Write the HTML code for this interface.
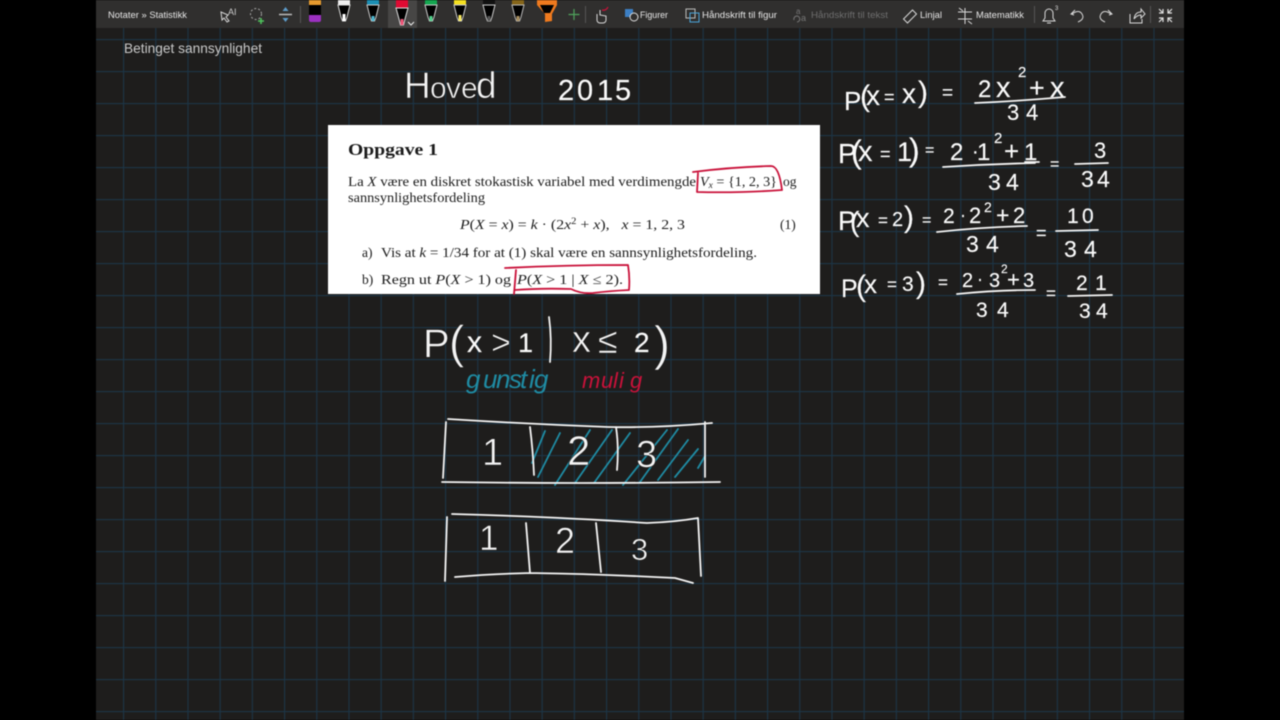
<!DOCTYPE html>
<html lang="nb"><head><meta charset="utf-8"><title>Betinget sannsynlighet</title>
<style>
html,body{margin:0;padding:0;background:#000;width:1280px;height:720px;overflow:hidden}
svg{display:block;filter:blur(.4px)}
text{font-family:"Liberation Sans",sans-serif;white-space:pre}
.ui{font-size:9.5px;fill:#e6e6e6}
.doc{font-family:"Liberation Serif",serif;font-size:13.5px;fill:#1c1c1c}
.i{font-style:italic}
.ink{fill:#fafafa;stroke:#fafafa;stroke-width:.15}
.big{fill:#f4f4f4;stroke:#1e1d1c;stroke-width:.6}
.s{fill:none;stroke:#f4f4f4;stroke-width:1.8;stroke-linecap:round;stroke-linejoin:round}
.h{fill:none;stroke:#1f8ba3;stroke-width:1.8;stroke-linecap:round}
.r{fill:none;stroke:#c9123a;stroke-width:1.8;stroke-linecap:round;stroke-linejoin:round}
.ic{fill:none;stroke:#d8d8d8;stroke-width:1}
</style></head><body>
<svg width="1280" height="720" viewBox="0 0 1280 720" xmlns="http://www.w3.org/2000/svg">
<defs>
<pattern id="g" x="123" y="39" width="32.2" height="32" patternUnits="userSpaceOnUse">
<path d="M.5 0V32M0 .5H32.2" stroke="#1c3546" stroke-width="1.2" fill="none"/>
</pattern>
</defs>
<rect width="1280" height="720" fill="#000"/>
<rect x="96" width="1088" height="720" fill="#1e1d1c"/>
<rect x="96" y="28" width="1088" height="692" fill="url(#g)"/>
<rect x="96" width="1088" height="28" fill="#302f2e"/>
<rect x="388" width="29" height="28" fill="#474645"/>

<!-- toolbar left -->
<text class="ui" x="108" y="18" textLength="79" lengthAdjust="spacingAndGlyphs">Notater » Statistikk</text>
<path class="ic" d="M221 12l7 3-2 2 3 4-2 1-3-4-2 2z" stroke="#aaa"/><text x="228" y="15" font-size="9" fill="#ccc">AI</text>
<circle cx="256" cy="14" r="5.500" fill="none" stroke="#aaa" stroke-dasharray="2 2"/>
<path d="M261 18v6M258 21h6" stroke="#4fc35c" stroke-width="1.6"/>
<path d="M279 14.500h13" stroke="#bbb" stroke-width="1.5"/>
<path d="M285.500 7l-3 4h6zM285.500 22l-3-4h6z" fill="#5d9bc9"/>
<path d="M300.500 6v17" stroke="#555"/>

<!-- pens -->
<rect x="309" y="0" width="12" height="5" fill="#e69a2e"/><rect x="309" y="5" width="12" height="10" fill="#000"/><path d="M309 15h12v5q0 2-2 2h-8q-2 0-2-2z" fill="#9b30c0"/>
<g transform="translate(344 0)"><rect x="-6" width="12" height="5" fill="#eee"/><path d="M-6 5L-3 17-1.500 21H1.500L3 17 6 5z" fill="#000" stroke="#ddd"/><path d="M-1.500 14h3v7h-3z" fill="#fff"/></g>
<g transform="translate(373 0)"><rect x="-6" width="12" height="5" fill="#1b8fb5"/><path d="M-6 5L-3 17-1.500 21H1.500L3 17 6 5z" fill="#000" stroke="#ccc"/><path d="M-1.500 16h3v5h-3z" fill="#4bb6cf"/></g>
<g transform="translate(402 0)"><rect x="-6" width="12" height="8" fill="#e00a33"/><path d="M-6 8L-3 19-1.500 25H1.500L3 19 6 8z" fill="#000" stroke="#ddd"/><path d="M-1.500 19h3v6h-3z" fill="#ee5577"/></g>
<path d="M408 22l3 3 3-3" fill="none" stroke="#eee" stroke-width="1"/>
<g transform="translate(431 0)"><rect x="-6" width="12" height="5" fill="#14a650"/><path d="M-6 5L-3 17-1.500 21H1.500L3 17 6 5z" fill="#000" stroke="#ccc"/><path d="M-1.500 16h3v5h-3z" fill="#4fd08a"/></g>
<g transform="translate(460 0)"><rect x="-6" width="12" height="5" fill="#f5e020"/><path d="M-6 5L-3 17-1.500 21H1.500L3 17 6 5z" fill="#000" stroke="#ccc"/><path d="M-1.500 15h3v6h-3z" fill="#f7e860"/></g>
<g transform="translate(489 0)"><rect x="-6" width="12" height="5" fill="#111"/><path d="M-6 5L-3 17-1.500 21H1.500L3 17 6 5z" fill="#000" stroke="#ccc"/><path d="M-1.500 16h3v5h-3z" fill="#555"/></g>
<g transform="translate(518 0)"><rect x="-6" width="12" height="5" fill="#85651a"/><path d="M-6 5L-3 17-1.500 21H1.500L3 17 6 5z" fill="#000" stroke="#bbb"/><path d="M-1.500 16h3v5h-3z" fill="#a88f60"/></g>
<path d="M537 0h20v5l-5 9v7l-7 1v-8l-8-9z" fill="#ef7a1e"/><path d="M540 5h14l-4 8h-6z" fill="#000"/>
<path d="M574 9v11M568.500 14.500h11" stroke="#4fa35c" stroke-width="1.2"/>
<path d="M585.500 6v17" stroke="#555"/>

<!-- toolbar right -->
<path class="ic" d="M597 14v6a3 3 0 0 0 3 3h3a3 3 0 0 0 3-3v-4l-6-1v-5"/><path d="M602 10q4 1 6-3" fill="none" stroke="#c9123a" stroke-width="1.3"/>
<rect x="625" y="9" width="8" height="8" fill="#3c7fc4"/><circle cx="634" cy="17" r="4" fill="#302f2e" stroke="#ddd"/>
<text class="ui" x="640" y="18" textLength="28" lengthAdjust="spacingAndGlyphs">Figurer</text>
<rect x="686" y="9" width="9" height="9" fill="none" stroke="#bbb"/><rect x="690" y="13" width="9" height="9" fill="none" stroke="#4aa4d8"/>
<text class="ui" x="702" y="18" textLength="75" lengthAdjust="spacingAndGlyphs">Håndskrift til figur</text>
<text x="796" y="14" font-size="8" fill="#777">a</text><text x="801" y="21" font-size="9" fill="#777">a</text><path d="M794 20a3 3 0 1 1 3 2" fill="none" stroke="#777"/>
<text class="ui" x="811" y="18" textLength="77" lengthAdjust="spacingAndGlyphs" style="fill:#6e6e6e">Håndskrift til tekst</text>
<path class="ic" d="M903.500 19l9-9 4 4-9 9z"/>
<text class="ui" x="920" y="18" textLength="22" lengthAdjust="spacingAndGlyphs">Linjal</text>
<path class="ic" d="M965 8v16M958 12h14M958 19h14M959 8l4 3M968 21l4 3"/>
<text class="ui" x="976" y="18" textLength="48" lengthAdjust="spacingAndGlyphs">Matematikk</text>
<path d="M1034.500 6v17M1150.500 6v17" stroke="#555"/>
<path class="ic" d="M1043 21h12l-2-3v-5a4 4 0 0 0-8 0v5zM1047 23h4"/>
<text x="1055" y="10" font-size="6" fill="#ddd">3</text>
<path class="ic" d="M1075 10l-4 4 3 1M1072 14q7-5 10 0t-4 8"/>
<path class="ic" d="M1108 10l4 4-3 1M1111 14q-7-5-10 0t4 8" stroke="#8a8a8a"/>
<path class="ic" d="M1130 14v9h12v-4M1134 19q1-7 7-7v-3l4 5-4 4v-3q-4 0-7 4z"/>
<path d="M1159 9l4 4m0-4v4h-4M1172 9l-4 4m0-4v4h4M1159 22l4-4m0 4v-4h-4M1172 22l-4-4m0 4v-4h4" fill="none" stroke="#e0e0e0" stroke-width="1.2"/>

<text x="124" y="53" font-size="14" fill="#c9c9c9" textLength="138" lengthAdjust="spacingAndGlyphs">Betinget sannsynlighet</text>

<!-- document -->
<rect x="328" y="125" width="492" height="169" fill="#fff"/>
<text class="doc" x="348" y="155" font-weight="bold" style="font-size:17px" textLength="90" lengthAdjust="spacingAndGlyphs">Oppgave 1</text>
<text class="doc" x="348" y="186" textLength="348" lengthAdjust="spacingAndGlyphs">La <tspan class="i">X</tspan> være en diskret stokastisk variabel med verdimengde</text>
<text class="doc" x="700" y="186" textLength="77" lengthAdjust="spacingAndGlyphs"><tspan class="i">V</tspan><tspan class="i" font-size="9" dy="2">x</tspan><tspan dy="-2"> = {1, 2, 3}</tspan></text>
<text class="doc" x="783" y="186">og</text>
<text class="doc" x="348" y="202" textLength="137" lengthAdjust="spacingAndGlyphs">sannsynlighetsfordeling</text>
<text class="doc" x="460" y="229" textLength="225" lengthAdjust="spacingAndGlyphs"><tspan class="i">P</tspan>(<tspan class="i">X</tspan> = <tspan class="i">x</tspan>) = <tspan class="i">k</tspan> · (2<tspan class="i">x</tspan><tspan font-size="9" dy="-5">2</tspan><tspan dy="5"> + </tspan><tspan class="i">x</tspan>),   <tspan class="i">x</tspan> = 1, 2, 3</text>
<text class="doc" x="780" y="229">(1)</text>
<text class="doc" x="362" y="257">a)</text>
<text class="doc" x="381" y="257" textLength="376" lengthAdjust="spacingAndGlyphs">Vis at <tspan class="i">k</tspan> = 1/34 for at (1) skal være en sannsynlighetsfordeling.</text>
<text class="doc" x="362" y="284">b)</text>
<text class="doc" x="381" y="284" textLength="130" lengthAdjust="spacingAndGlyphs">Regn ut <tspan class="i">P</tspan>(<tspan class="i">X</tspan> &gt; 1) og</text>
<text class="doc" x="517" y="284" textLength="106" lengthAdjust="spacingAndGlyphs"><tspan class="i">P</tspan>(<tspan class="i">X</tspan> &gt; 1 | <tspan class="i">X</tspan> ≤ 2).</text>

<!-- red marks -->
<path class="r" d="M693 172q40-5 78-6 8 0 11 24-40 3-85 2l1-19"/>
<path class="r" d="M505 268q60-3 123-3 2 12 1 25-20 1-36 3-12 1-22-4-30-1-56 1M516 270l-2 24"/>

<!-- handwriting: heading -->
<g class="big">
<text font-size="37" y="98" x="404">H</text><text font-size="30" y="98" x="430 446 461">ove</text><text font-size="37" y="98" x="476">d</text>
</g>
<text class="ink" font-size="29" y="100" x="558 577 597 615">2015</text>

<!-- right-hand equations -->
<g class="ink" font-size="24">
<text x="844" y="110" font-size="26">P</text><text x="860" y="106" font-size="30">(</text><text x="866" y="105" font-size="28">x</text><text x="884" y="103" font-size="18">=</text><text x="902" y="103" font-size="28">x</text><text x="918" y="102" font-size="30">)</text><text x="942" y="99" font-size="19">=</text>
<text font-size="24" x="978" y="97">2</text><text font-size="29" x="996" y="97">x</text><text font-size="15" x="1018" y="77">2</text><text font-size="27" x="1029" y="97">+</text><text font-size="29" x="1050" y="97">x</text>
<text x="1007 1026" y="120" font-size="22">34</text>

<text x="838" y="163" font-size="28">P</text><text x="851" y="163" font-size="32">(</text><text x="858" y="161" font-size="29">x</text><text x="880" y="160" font-size="18">=</text><text x="897" y="161" font-size="27">1</text><text x="909" y="161" font-size="32">)</text><text x="925" y="155" font-size="16">=</text>
<text x="950" y="160" font-size="24">2</text><text x="972" y="158" font-size="20">·</text><text x="977" y="160" font-size="24">1</text><text x="994" y="143" font-size="15">2</text><text x="1004" y="160" font-size="26">+</text><text x="1024" y="160" font-size="24">1</text>
<text x="988 1006" y="190" font-size="23">34</text><text x="1050" y="169" font-size="16">=</text>
<text x="1094" y="158" font-size="22">3</text><text x="1081 1097" y="187" font-size="23">34</text>

<text x="838" y="230" font-size="27">P</text><text x="850" y="231" font-size="28">(</text><text x="856" y="227" font-size="27">x</text><text x="878" y="226" font-size="17">=</text><text x="892" y="226" font-size="20">2</text><text x="904" y="227" font-size="30">)</text><text x="922" y="225" font-size="16">=</text>
<text x="943" y="223" font-size="21">2</text><text x="960" y="221" font-size="18">·</text><text x="969" y="223" font-size="22">2</text><text x="984" y="212" font-size="14">2</text><text x="996" y="223" font-size="23">+</text><text x="1013" y="223" font-size="22">2</text>
<text x="966 986" y="252" font-size="23">34</text><text x="1036" y="239" font-size="18">=</text>
<text x="1067 1082" y="223" font-size="21">10</text><text x="1064 1084" y="257" font-size="23">34</text>

<text x="841" y="297" font-size="25">P</text><text x="856" y="296" font-size="30">(</text><text x="864" y="293" font-size="26">x</text><text x="887" y="290" font-size="17">=</text><text x="902" y="291" font-size="21">3</text><text x="916" y="293" font-size="30">)</text><text x="938" y="288" font-size="17">=</text>
<text x="962" y="287" font-size="20">2</text><text x="977" y="285" font-size="18">·</text><text x="989" y="287" font-size="20">3</text><text x="1001" y="273" font-size="12">2</text><text x="1007" y="287" font-size="22">+</text><text x="1023" y="287" font-size="20">3</text>
<text x="976 997" y="317" font-size="21">34</text><text x="1046" y="299" font-size="17">=</text>
<text x="1076 1095" y="290" font-size="21">21</text><text x="1079 1096" y="318" font-size="21">34</text>
</g>
<path class="s" d="M975 103q45-2 90-6M943 167q46-3 92-4M1075 164l33-1M1025 162l14 0M937 232q45-5 90-6M1056 231l42-1M957 294q40-4 78-4M1068 296l44-1"/>

<!-- middle expression -->
<g class="big">
<text x="423" y="357" font-size="40">P</text><text x="449" y="358" font-size="46">(</text><text x="572" y="352" font-size="38">x</text><text x="598" y="353" font-size="36">≤</text><text x="654" y="360" font-size="48">)</text><text x="491" y="354" font-size="34">&gt;</text>
</g>
<g class="ink"><text x="467" y="352" font-size="30">x</text><text x="518" y="352" font-size="27">1</text><text x="634" y="352" font-size="28">2</text></g>
<path class="s" d="M549 317q3 22 1 45"/>
<text class="i" font-size="26" fill="#1f8ba3" y="388" x="466 483 496 509 520 529 534">gunstig</text>
<text class="i" font-size="22" fill="#c9123a" y="388" x="582 601 613 619 630">mulig</text>

<!-- shaded box -->
<path class="h" d="M532 463l13-32M538 477l22-44M555 485l35-55M575 483l37-53M594 483l36-50M623 485l44-55M640 482l38-53M658 480l30-40M675 477l23-28M698 468l7-12"/>
<path class="s" d="M448 419q80 5 160 8 50 1 104-4M442 482q140 2 278 0M446 422l-3 56M705 422v55M530 427q3 24 4 48M616 427q3 20 1 43"/>
<g class="big"><text x="482" y="465" font-size="38">1</text><text x="567" y="465" font-size="42">2</text><text x="636" y="467" font-size="38">3</text></g>

<!-- empty box -->
<path class="s" d="M452 514Q560 517 647 523Q675 522 698 518M447 517L445 581M698 518L701 576M455 577Q490 574 530 573Q600 574 675 578L693 583M526 523L530 573M596 523L601 572"/>
<g class="big"><text x="479" y="550" font-size="35">1</text><text x="555" y="553" font-size="36">2</text><text x="631" y="560" font-size="31">3</text></g>
</svg>
</body></html>
